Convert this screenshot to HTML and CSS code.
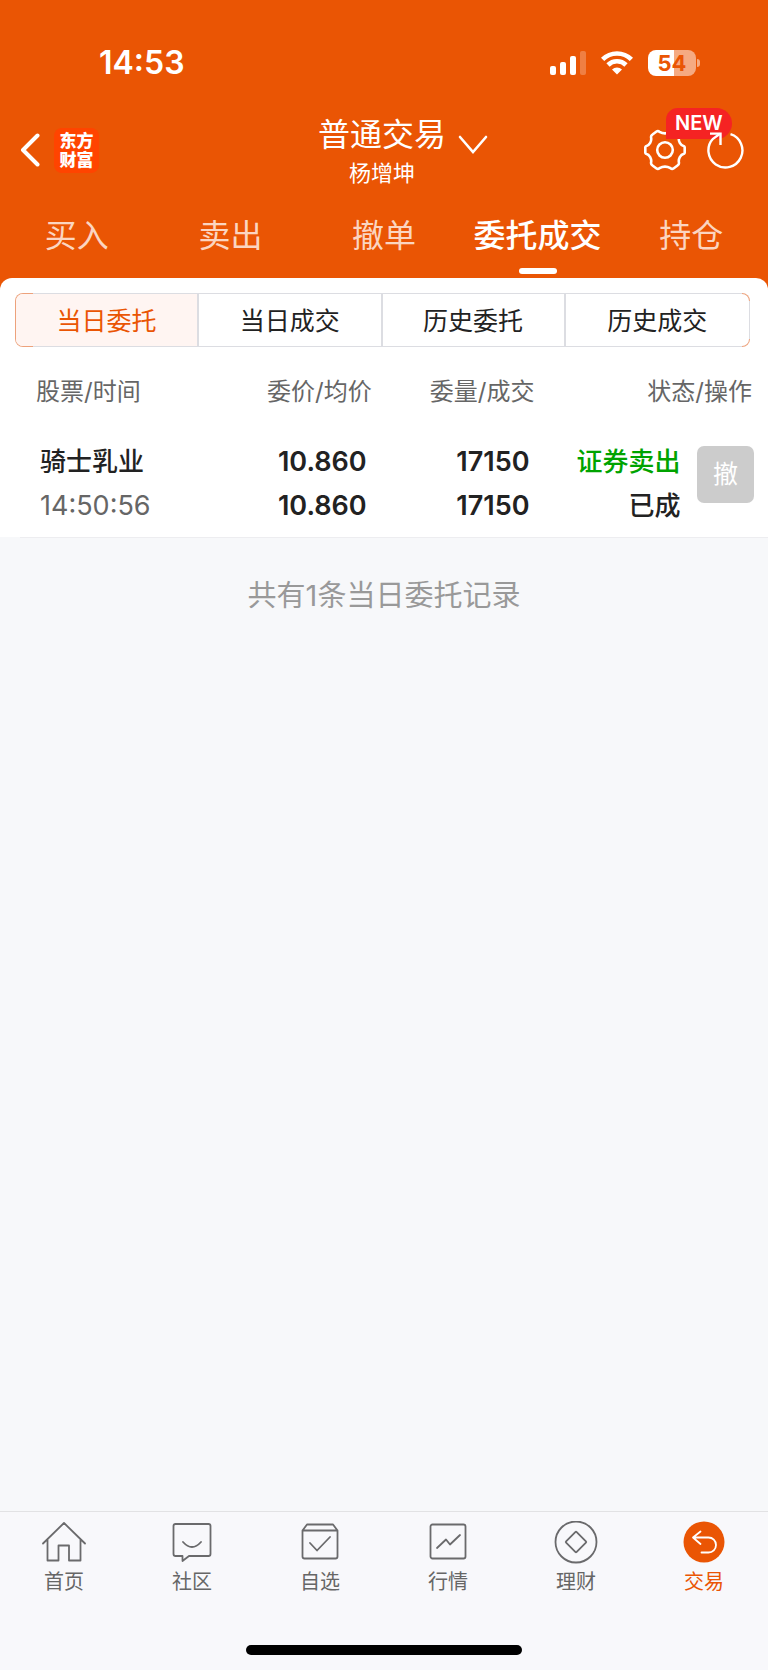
FILE: index.html
```html
<!DOCTYPE html>
<html lang="zh-CN">
<head>
<meta charset="utf-8">
<meta name="viewport" content="width=device-width, initial-scale=1">
<title>普通交易</title>
<link rel="stylesheet" href="styles.css">
</head>
<body>

<header class="top">
  <div class="status-bar">
    <span class="clock">14:53</span>
    <div class="status-icons">
      <svg class="signal" viewBox="0 0 36 24" width="36" height="24" fill="#fff">
        <rect x="0" y="15" width="6" height="9" rx="2"/>
        <rect x="10" y="11" width="6" height="13" rx="2"/>
        <rect x="20" y="5" width="6" height="19" rx="2"/>
        <rect x="30" y="0" width="6" height="24" rx="2" opacity=".25"/>
      </svg>
      <svg class="wifi" viewBox="0 0 32 24" width="32" height="24" fill="none" stroke="#fff" stroke-width="4.6">
        <path d="M1.6 8.4a20.4 20.4 0 0 1 28.8 0"/>
        <path d="M7 14a12.8 12.8 0 0 1 18 0"/>
        <path d="M16 23.6l-5-5a7.2 7.2 0 0 1 10 0z" fill="#fff" stroke="none"/>
      </svg>
      <div class="battery"><span class="battery-level">54</span></div>
    </div>
  </div>

  <div class="title-bar">
    <div class="title-left">
      <button class="icon-button" aria-label="返回">
        <svg viewBox="0 0 20 34" width="20" height="34" fill="none" stroke="#fff" stroke-width="4" stroke-linecap="round" stroke-linejoin="round">
          <path d="M17.500 2.500L3 17l14.500 14.500"/>
        </svg>
      </button>
      <a class="logo" href="#">东方<br>财富</a>
    </div>
    <button class="account">
      <span class="account-type">普通交易</span>
      <svg class="account-arrow" viewBox="0 0 30 20" width="30" height="20" fill="none" stroke="#fff" stroke-width="2.600" stroke-linecap="round">
        <path d="M2 2l13 15L28 2"/>
      </svg>
      <span class="account-name">杨增坤</span>
    </button>
    <div class="title-right">
      <button class="icon-button" aria-label="设置">
        <svg viewBox="0 0 42 42" width="42" height="42" fill="none" stroke="#fff" stroke-width="2.600" stroke-linejoin="round">
          <path d="M15.500 2.800Q21 6 26.500 2.800Q28 1.500 29.500 2.500L33.500 5.500Q35 6.500 35 8C34 12 36.500 16.500 40 17.200Q40.700 17.500 40.700 18.500V23.500Q40.700 24.500 40 24.800C36.500 25.500 34 30 35 34Q35 35.500 33.500 36.500L29.500 39.500Q28 40.500 26.500 39.200Q21 36 15.500 39.200Q14 40.500 12.500 39.500L8.500 36.500Q7 35.500 7 34C8 30 5.500 25.500 2 24.800Q1.300 24.500 1.300 23.500V18.500Q1.300 17.500 2 17.200C5.500 16.500 8 12 7 8Q7 6.500 8.500 5.500L12.500 2.500Q14 1.500 15.500 2.800Z"/>
          <circle cx="21" cy="21" r="7.800"/>
        </svg>
        <span class="badge">NEW</span>
      </button>
      <button class="icon-button refresh" aria-label="刷新">
        <svg viewBox="0 0 38 38" width="38" height="38" fill="none" stroke="#fff" stroke-width="2.400">
          <path d="M24.500 3.200A17 17 0 1 1 7 7.800L14 2.800"/>
          <path d="M4 2.600H14.500V14"/>
        </svg>
      </button>
    </div>
  </div>

  <nav class="tabs">
    <a class="tab" href="#">买入</a>
    <a class="tab" href="#">卖出</a>
    <a class="tab" href="#">撤单</a>
    <a class="tab active" href="#">委托成交</a>
    <a class="tab" href="#">持仓</a>
  </nav>
</header>

<main class="panel">
  <div class="segments">
    <button class="segment active">当日委托</button>
    <button class="segment">当日成交</button>
    <button class="segment">历史委托</button>
    <button class="segment">历史成交</button>
  </div>

  <table class="orders">
    <colgroup>
      <col class="col-stock">
      <col class="col-price">
      <col class="col-amount">
      <col class="col-status">
      <col class="col-action">
    </colgroup>
    <thead>
      <tr>
        <th>股票/时间</th>
        <th>委价/均价</th>
        <th>委量/成交</th>
        <th colspan="2">状态/操作</th>
      </tr>
    </thead>
    <tbody>
      <tr>
        <td>骑士乳业<br><span class="time">14:50:56</span></td>
        <td class="number">10.860<br>10.860</td>
        <td class="number">17150<br>17150</td>
        <td><span class="sell">证券卖出</span><br>已成</td>
        <td><button class="cancel" disabled>撤</button></td>
      </tr>
    </tbody>
  </table>
</main>

<p class="summary">共有1条当日委托记录</p>

<footer class="bottom">
  <nav class="bottom-nav">
    <a class="nav-item" href="#">
      <svg class="nav-icon" viewBox="0 0 44 44">
        <path d="M1 22.500L22 2l21 20.500M5.500 18.500V39.500H16.500V24.500H27V39.500H38.500V18.500"/>
      </svg>
      首页
    </a>
    <a class="nav-item" href="#">
      <svg class="nav-icon" viewBox="0 0 44 44">
        <path d="M5.500 3H38.500Q40.500 3 40.500 5V33Q40.500 35 38.500 35H19L12.500 40V35H5.500Q3.500 35 3.500 33V5Q3.500 3 5.500 3ZM13 21Q22 31 31 21"/>
      </svg>
      社区
    </a>
    <a class="nav-item" href="#">
      <svg class="nav-icon" viewBox="0 0 44 44">
        <path d="M4.500 9.500L9 3.500H35L39.500 9.500V35.500Q39.500 37.500 37.500 37.500H6.500Q4.500 37.500 4.500 35.500ZM4.500 9.500H39.500M12 22l7 7.500L32 16"/>
      </svg>
      自选
    </a>
    <a class="nav-item" href="#">
      <svg class="nav-icon" viewBox="0 0 44 44">
        <rect x="4.500" y="3.500" width="35" height="34" rx="2"/>
        <path d="M11 27l9-8.500 4 5L34 14"/>
      </svg>
      行情
    </a>
    <a class="nav-item" href="#">
      <svg class="nav-icon" viewBox="0 0 44 44">
        <circle cx="22" cy="21" r="20.500"/>
        <rect x="14.500" y="13.500" width="15" height="15" rx="1" transform="rotate(45 22 21)"/>
      </svg>
      理财
    </a>
    <a class="nav-item active" href="#">
      <svg class="nav-icon" viewBox="0 0 44 44">
        <circle cx="22" cy="21" r="20.500" fill="#ea5504" stroke="none"/>
        <path d="M18.500 10.500L11 16.500l7.500 6.500M11 16.500H26.500a7.500 7.500 0 0 1 0 15H19.500" stroke="#fff"/>
      </svg>
      交易
    </a>
  </nav>
  <div class="home-indicator"></div>
</footer>

</body>
</html>
```
FILE: styles.css
```css
* {
  box-sizing: border-box;
}

body {
  margin: 0;
  min-height: 100vh;
  display: flex;
  flex-direction: column;
  background-color: #f7f8fa;
  color: #222;
  font-family: Inter, "Noto Sans CJK SC", sans-serif;
}

button {
  padding: 0;
  border: none;
  background: none;
  color: inherit;
  font: inherit;
  cursor: pointer;
}

a {
  color: inherit;
  text-decoration: none;
}

svg {
  display: block;
}

/* Header */
.top {
  padding-top: 40px;
  padding-bottom: 12px;
  background-color: #ea5504;
  color: #fff;
}

.status-bar {
  display: flex;
  justify-content: space-between;
  align-items: center;
  height: 45px;
  padding: 0 72px 0 99px;
}

.clock {
  font-size: 32px;
  font-weight: 600;
}

.status-icons {
  display: flex;
  align-items: center;
  gap: 15px;
}

.battery {
  position: relative;
  width: 48px;
  height: 26px;
  border-radius: 8px;
  background: linear-gradient(to right, #fff 54%, #f5aa82 54%);
  color: #ea5504;
  font-size: 22px;
  font-weight: 700;
  line-height: 26px;
  text-align: center;
}

.battery::after {
  content: "";
  position: absolute;
  left: 49px;
  top: 9px;
  width: 3px;
  height: 8px;
  border-radius: 0 4px 4px 0;
  background-color: #f5aa82;
}

.title-bar {
  display: grid;
  grid-template-columns: 1fr auto 1fr;
  align-items: center;
  height: 112px;
  padding: 18px 24px 0 20px;
}

.title-left {
  display: flex;
  align-items: center;
  gap: 14px;
}

.logo {
  width: 45px;
  height: 45px;
  padding-top: 4px;
  border-radius: 8px;
  background-color: #ff4400;
  font-size: 17px;
  font-weight: 900;
  line-height: 19px;
  text-align: center;
}

.account {
  display: grid;
  grid-template-columns: 30px auto 30px;
  column-gap: 12px;
  align-items: center;
  padding-top: 6px;
}

.account-type {
  grid-column: 2;
  font-size: 32px;
  line-height: 40px;
}

.account-arrow {
  margin-top: 20px;
}

.account-name {
  grid-column: 2;
  font-size: 22px;
  line-height: 36px;
}

.title-right {
  display: flex;
  justify-content: flex-end;
  align-items: center;
  gap: 20px;
}

.icon-button {
  position: relative;
}

.refresh {
  z-index: 1;
}

/* Sits over the settings icon */
.badge {
  position: absolute;
  left: 22px;
  top: -21px;
  padding: 0 9px;
  border-radius: 12px 16px 16px 0;
  background-color: #f52323;
  font-size: 20px;
  font-weight: 600;
  line-height: 31px;
}

.tabs {
  display: grid;
  grid-template-columns: repeat(5, 1fr);
}

.tab {
  display: flex;
  flex-direction: column;
  align-items: center;
  height: 81px;
  padding-top: 15px;
  color: #fbd5c1;
  font-size: 32px;
  line-height: 48px;
  white-space: nowrap;
}

.tab.active {
  color: #fff;
  font-weight: 500;
}

.tab.active::after {
  content: "";
  width: 38px;
  height: 6px;
  margin-top: 8px;
  border-radius: 3px;
  background-color: #fff;
}

/* Orders */
.panel {
  margin-top: -12px;
  padding-top: 15px;
  border-radius: 12px 12px 0 0;
  background-color: #fff;
}

.segments {
  display: grid;
  grid-template-columns: repeat(4, 1fr);
  margin: 0 18px 0 15px;
  border: 1px solid transparent;
  border-radius: 8px;
  overflow: hidden;
  /* grey frame with orange corners */
  background:
    linear-gradient(#fff, #fff) padding-box,
    linear-gradient(#dcdde2, #dcdde2) right center / 1px calc(100% - 16px) no-repeat border-box,
    linear-gradient(to right, #eda27c 18px, #dcdde2 18px, #dcdde2 calc(100% - 8px), #eda27c calc(100% - 8px)) border-box;
}

.segment {
  height: 52px;
  padding-bottom: 3px;
  border-right: 2px solid #dcdde2;
  font-size: 25px;
  white-space: nowrap;
}

.segment:last-child {
  border-right: none;
}

.segment.active {
  background-color: #fff5f2;
  color: #ea5504;
}

.orders {
  width: 100%;
  table-layout: fixed;
  border-collapse: collapse;
  text-align: right;
  white-space: nowrap;
}

.col-stock {
  width: 25%;
}

.col-price {
  width: 23.4%;
}

.col-amount {
  width: 21.2%;
}

.col-status {
  width: 19.4%;
}

.col-action {
  width: 11%;
}

.orders th {
  padding: 27px 0 20px;
  color: #666;
  font-size: 24px;
  font-weight: 400;
  line-height: 36px;
}

.orders th:first-child {
  padding-left: 36px;
  text-align: left;
}

.orders th:last-child {
  padding-right: 16px;
}

.orders td {
  padding: 10px 3px 9px 0;
  font-size: 26px;
  font-weight: 500;
  line-height: 44px;
}

.orders td:first-child {
  padding-left: 40px;
  text-align: left;
}

.orders td:last-child {
  padding-right: 14px;
}

.orders .number {
  padding-right: 5px;
  font-size: 27px;
  font-weight: 600;
}

.time {
  color: #666;
  font-size: 27px;
  font-weight: 400;
}

.sell {
  color: #00a300;
}

.cancel {
  width: 57px;
  height: 57px;
  margin-bottom: 20px;
  border-radius: 7px;
  background-color: #ccc;
  color: #fff;
  font-size: 25px;
  font-weight: 400;
  vertical-align: middle;
}

.summary {
  flex-grow: 1;
  margin: 0 0 0 20px;
  padding: 37px 20px 0 0;
  border-top: 1px solid #ededf0;
  color: #999;
  font-size: 29px;
  line-height: 42px;
  text-align: center;
}

/* Bottom navigation */
.bottom {
  border-top: 1px solid #e2e2e4;
  background-color: #f8f8fb;
}

.bottom-nav {
  display: grid;
  grid-template-columns: repeat(6, 1fr);
  padding-top: 9px;
}

.nav-item {
  display: flex;
  flex-direction: column;
  align-items: center;
  color: #666;
  font-size: 20px;
  line-height: 35px;
}

.nav-item.active {
  color: #ea5504;
}

.nav-icon {
  width: 44px;
  height: 44px;
  fill: none;
  stroke: #6a6a6c;
  stroke-width: 1.8;
  stroke-linecap: round;
  stroke-linejoin: round;
}

.home-indicator {
  width: 36%;
  height: 10px;
  margin: 45px auto 15px;
  border-radius: 5px;
  background-color: #000;
}
```
